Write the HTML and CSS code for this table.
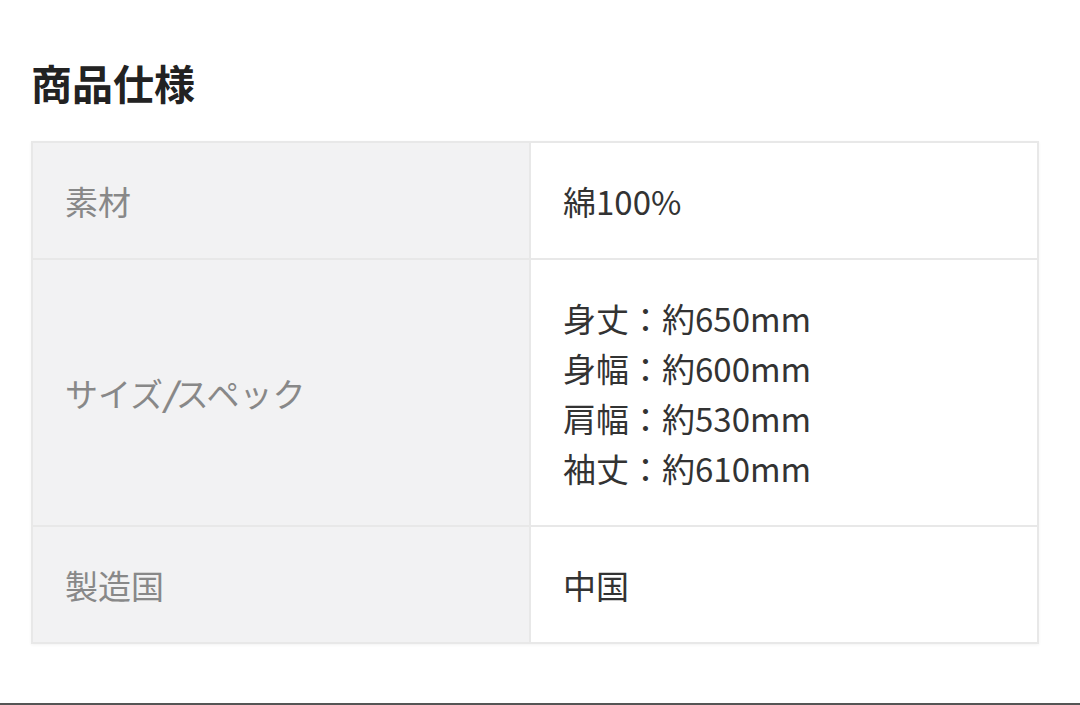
FILE: index.html
```html
<!DOCTYPE html>
<html lang="ja">
<head>
  <meta charset="UTF-8">
  <meta name="viewport" content="width=device-width, initial-scale=1.0">
  <title>商品仕様</title>
  <link rel="stylesheet" href="styles.css">
</head>
<body>
  <main class="page">
    <h2 class="title">商品仕様</h2>
    <table class="spec">
      <tr>
        <th>素材</th>
        <td>綿100%</td>
      </tr>
      <tr>
        <th>サイズ<span class="sep">/</span>スペック</th>
        <td>
          身丈：約650mm<br>
          身幅：約600mm<br>
          肩幅：約530mm<br>
          袖丈：約610mm
        </td>
      </tr>
      <tr>
        <th>製造国</th>
        <td>中国</td>
      </tr>
    </table>
  </main>
  <div class="bottom-bar"></div>
</body>
</html>
```

FILE: styles.css
```css
body {
  margin: 0;
  height: 705px;
  display: flex;
  flex-direction: column;
  font-family: "Noto Sans CJK JP", "Noto Sans", sans-serif;
  background: #fff;
  color: #333;
  overflow: hidden;
}
.page {
  flex: 1;
  padding: 0 41px 0 31px;
}
.title {
  margin: 56px 0 33px 0;
  font-size: 41px;
  line-height: 52px;
  font-weight: 700;
  color: #222;
}
.spec {
  width: 100%;
  border-collapse: collapse;
  border: 2px solid #e8e8e8;
  box-shadow: 0 1px 3px rgba(0, 0, 0, 0.05);
}
.spec th,
.spec td {
  border: 2px solid #e8e8e8;
  padding: 33px 32px 32px 32px;
  font-size: 33px;
  line-height: 50px;
  text-align: left;
  vertical-align: middle;
}
.spec th {
  width: 432px;
  background: #f2f2f3;
  color: #888;
  font-weight: 400;
}
.spec td {
  background: #fff;
  color: #333;
}
.sep {
  font-weight: 700;
  font-style: italic;
}
.bottom-bar {
  height: 2px;
  background: #555;
}
```
